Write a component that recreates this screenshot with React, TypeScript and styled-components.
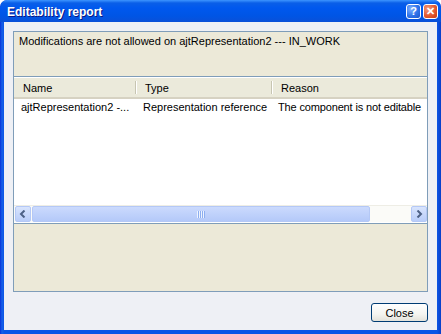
import React from "react";
import styled, { createGlobalStyle } from "styled-components";

const Global = createGlobalStyle`
  html, body { margin: 0; padding: 0; background: #ffffff; }
  body { font-family: Tahoma, "Liberation Sans", Arial, sans-serif; font-size: 11px; }
`;

const Window = styled.div`
  width: 441px;
  height: 334px;
  box-sizing: border-box;
  background: linear-gradient(to right, #0831d9 0, #1660e8 2px, #0b55e6 4px, #0b55e6 calc(100% - 4px), #0a3fc7 100%);
  border-radius: 7px 7px 0 0;
  display: flex;
  flex-direction: column;
  overflow: hidden;
`;

const TitleBar = styled.div`
  height: 22px;
  flex: 0 0 22px;
  background: linear-gradient(to bottom, #3d95ff 0, #0a5fe8 3px, #0058ee 8px, #0055e5 16px, #0a50d8 22px);
  display: flex;
  align-items: center;
  padding: 0 3px 0 7px;
  border-radius: 7px 7px 0 0;
`;

const Title = styled.div`
  flex: 1;
  color: #ffffff;
  font-weight: bold;
  font-size: 12px;
  text-shadow: 1px 1px 0 #0a1883;
  padding-top: 1px;
`;

const TitleButton = styled.div<{ $red?: boolean }>`
  width: 15px;
  height: 15px;
  margin-left: 2px;
  border: 1px solid #ffffff;
  border-radius: 3px;
  box-sizing: border-box;
  background: ${(p) =>
    p.$red
      ? "radial-gradient(circle at 30% 30%, #f39a7c 0, #e35a31 55%, #c53b12 100%)"
      : "radial-gradient(circle at 30% 30%, #7fb0ff 0, #2f73ea 55%, #1d55c9 100%)"};
  display: flex;
  align-items: center;
  justify-content: center;
  color: #ffffff;
  font-weight: bold;
  font-size: 11px;
  line-height: 1;
`;

const Client = styled.div`
  flex: 1;
  margin: 0 4px 4px 4px;
  background: #eef0f5;
  display: flex;
  flex-direction: column;
  padding: 9px 9px 0 9px;
`;

const Frame = styled.div`
  border: 1px solid #7f9db9;
  background: #ece9d8;
  display: flex;
  flex-direction: column;
  height: 261px;
  box-sizing: border-box;
`;

const Message = styled.div`
  height: 45px;
  flex: 0 0 45px;
  padding: 3px 0 0 5px;
  box-sizing: border-box;
  color: #000000;
  border-bottom: 1px solid #7f9db9;
`;

const List = styled.div`
  height: 147px;
  flex: 0 0 147px;
  box-sizing: border-box;
  background: #ffffff;
  display: flex;
  flex-direction: column;
  border-bottom: 1px solid #7f9db9;
`;

const HeaderRow = styled.div`
  display: grid;
  grid-template-columns: 122px 136px 1fr;
  height: 19px;
  background: #ebeadb;
  border-bottom: 2px solid #d6d2c2;
  margin-top: 1px;
`;

const HeaderCell = styled.div<{ $last?: boolean }>`
  display: flex;
  align-items: center;
  padding-left: 9px;
  position: relative;
  &::after {
    content: "";
    display: ${(p) => (p.$last ? "none" : "block")};
    position: absolute;
    right: 0;
    top: 3px;
    bottom: 3px;
    width: 1px;
    background: #c7c5b2;
    box-shadow: 1px 0 0 #ffffff;
  }
`;

const Rows = styled.div`
  flex: 1;
`;

const Row = styled.div`
  display: grid;
  grid-template-columns: 122px 136px 1fr;
  height: 16px;
  align-items: center;
`;

const Cell = styled.div<{ $tight?: boolean }>`
  padding-left: ${(p) => (p.$tight ? "6px" : "7px")};
  letter-spacing: ${(p) => (p.$tight ? "-0.15px" : "0")};
  white-space: nowrap;
`;

const ScrollBar = styled.div`
  height: 16px;
  flex: 0 0 16px;
  display: flex;
  align-items: stretch;
  background: #fbfbf8;
  border-top: 1px solid #eeede5;
  margin-bottom: 1px;
`;

const ArrowBtn = styled.div`
  width: 16px;
  box-sizing: border-box;
  border: 1px solid #b4c8f6;
  border-radius: 2px;
  background: linear-gradient(to bottom, #d8e4fd, #b9cdf9);
  display: flex;
  align-items: center;
  justify-content: center;
  margin-left: 1px;
`;

const Thumb = styled.div`
  width: 338px;
  box-sizing: border-box;
  border: 1px solid #b4c8f6;
  border-radius: 2px;
  background: linear-gradient(to bottom, #cbdafd, #b4c9f9);
  margin-left: 1px;
  display: flex;
  align-items: center;
  justify-content: center;
`;

const Track = styled.div`
  flex: 1;
`;

const Bottom = styled.div`
  flex: 1;
  background: #ece9d8;
`;

const Footer = styled.div`
  display: flex;
  justify-content: flex-end;
  padding-top: 11px;
`;

const Button = styled.button`
  width: 57px;
  height: 19px;
  border: 1px solid #003c74;
  border-radius: 3px;
  background: linear-gradient(to bottom, #ffffff 0, #f4f4f0 60%, #e3e2da 100%);
  font-family: Tahoma, "Liberation Sans", Arial, sans-serif;
  font-size: 11px;
  color: #000000;
  padding: 0;
`;

const Chevron = ({ dir }: { dir: "l" | "r" }) => (
  <svg width="8" height="8" viewBox="0 0 8 8">
    <path
      d={dir === "l" ? "M5.5 0.5 L2 4 L5.5 7.5" : "M2.5 0.5 L6 4 L2.5 7.5"}
      stroke="#4d6185"
      strokeWidth="2"
      fill="none"
    />
  </svg>
);

const Grip = () => (
  <svg width="8" height="7" viewBox="0 0 8 7">
    {[0, 2, 4, 6].map((x) => (
      <rect key={x} x={x} y={0} width={1} height={7} fill="#eef3fe" />
    ))}
    {[1, 3, 5, 7].map((x) => (
      <rect key={x} x={x} y={0} width={1} height={7} fill="#8caef0" />
    ))}
  </svg>
);

export default function App() {
  return (
    <>
      <Global />
      <Window>
        <TitleBar>
          <Title>Editability report</Title>
          <TitleButton>?</TitleButton>
          <TitleButton $red>✕</TitleButton>
        </TitleBar>
        <Client>
          <Frame>
            <Message>Modifications are not allowed on ajtRepresentation2 --- IN_WORK</Message>
            <List>
              <HeaderRow>
                <HeaderCell>Name</HeaderCell>
                <HeaderCell>Type</HeaderCell>
                <HeaderCell $last>Reason</HeaderCell>
              </HeaderRow>
              <Rows>
                <Row>
                  <Cell>ajtRepresentation2 -...</Cell>
                  <Cell>Representation reference</Cell>
                  <Cell $tight>The component is not editable</Cell>
                </Row>
              </Rows>
              <ScrollBar>
                <ArrowBtn><Chevron dir="l" /></ArrowBtn>
                <Thumb><Grip /></Thumb>
                <Track />
                <ArrowBtn><Chevron dir="r" /></ArrowBtn>
              </ScrollBar>
            </List>
            <Bottom />
          </Frame>
          <Footer>
            <Button>Close</Button>
          </Footer>
        </Client>
      </Window>
    </>
  );
}
